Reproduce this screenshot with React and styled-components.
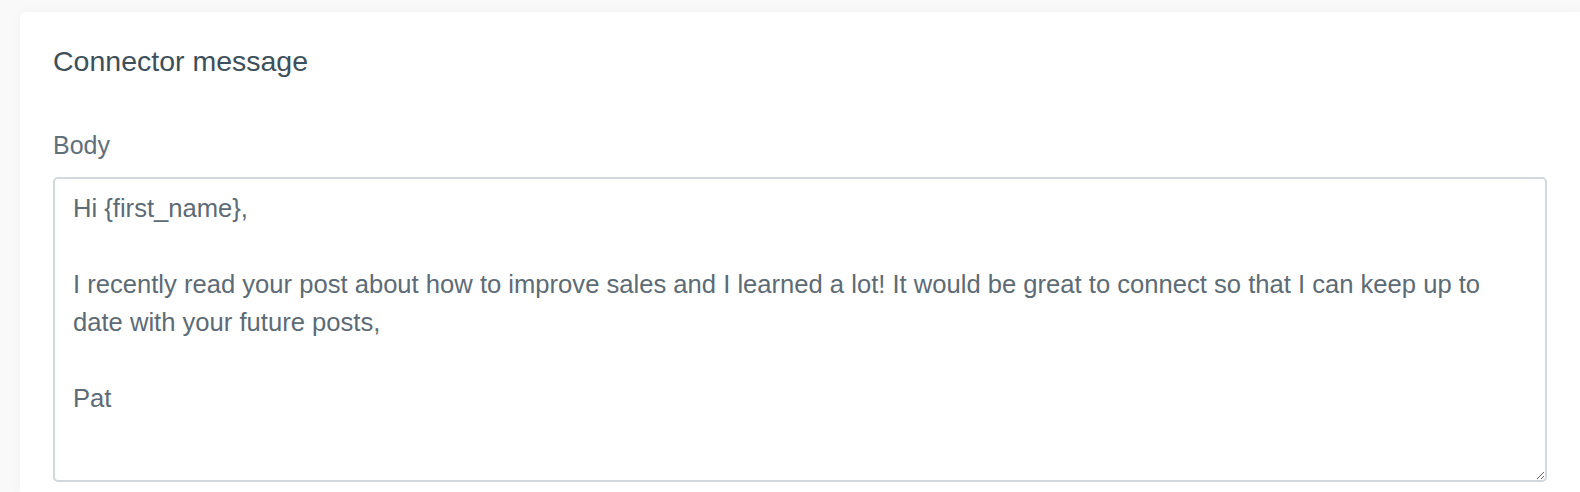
import React, { useState } from 'react';
import styled, { createGlobalStyle } from 'styled-components';

const GlobalStyle = createGlobalStyle`
  html, body {
    margin: 0;
    background-color: #f9f9f9;
    font-family: "Liberation Sans", Arial, sans-serif;
    overflow: hidden;
  }
`;

const Page = styled.div`
  padding: 12px 0 0 20px;
  height: 492px;
  box-sizing: border-box;
`;

const Card = styled.section`
  background-color: #fff;
  border-radius: 6px 0 0 0;
  box-shadow: 0 0 14px rgba(0, 0, 0, 0.035);
  padding: 31px 33px 10px;
`;

const Title = styled.h2`
  margin: 0;
  font-size: 28.5px;
  line-height: 36px;
  font-weight: 400;
  color: #3d4f5a;
`;

const Field = styled.div`
  display: flex;
  flex-direction: column;
  gap: 17px;
  margin-top: 51px;
`;

const Label = styled.label`
  font-size: 25px;
  line-height: 30px;
  color: #5f707a;
`;

const Body = styled.textarea`
  display: block;
  width: 100%;
  height: 305px;
  box-sizing: border-box;
  margin: 0;
  padding: 10px 26px 10px 18px;
  border: 2px solid #d3d8dc;
  border-radius: 5px;
  font-family: "Liberation Sans", Arial, sans-serif;
  font-size: 25.6px;
  line-height: 38px;
  color: #5c6b75;
  background: #fff;
  resize: vertical;
  outline: none;
`;

const initialBody = `Hi {first_name},

I recently read your post about how to improve sales and I learned a lot! It would be great to connect so that I can keep up to date with your future posts,

Pat`;

const App = () => {
    const [body, setBody] = useState(initialBody);

    return (
        <Page>
            <GlobalStyle />
            <Card>
                <Title>Connector message</Title>
                <Field>
                    <Label htmlFor="connector-body">Body</Label>
                    <Body
                        id="connector-body"
                        value={body}
                        onChange={(e) => setBody(e.target.value)}
                    />
                </Field>
            </Card>
        </Page>
    );
};

export default App;
